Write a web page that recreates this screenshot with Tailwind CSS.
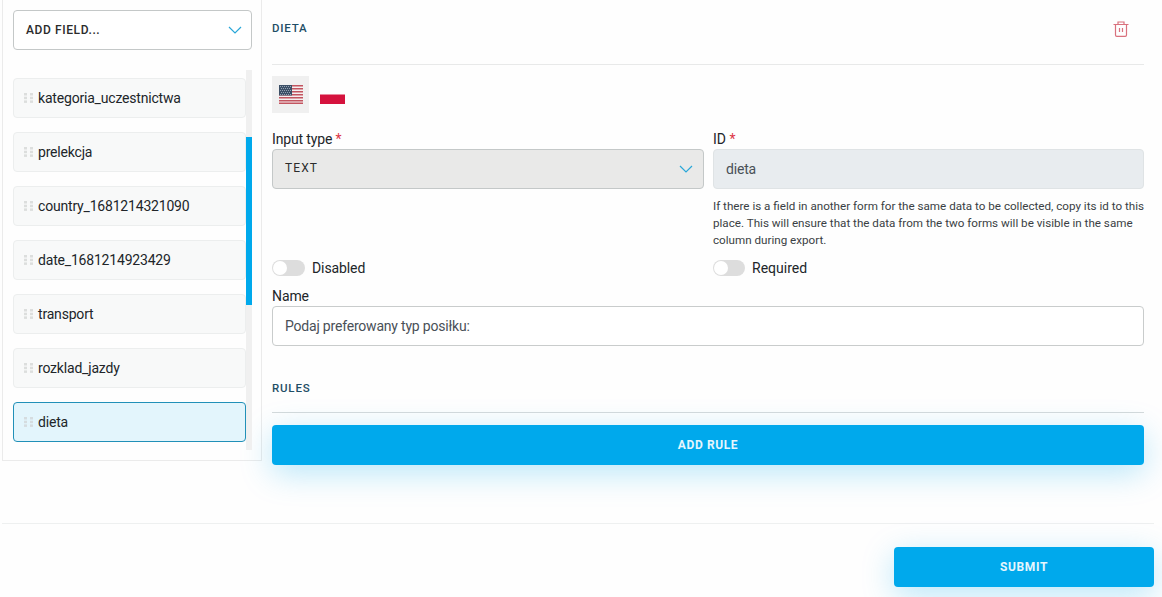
<!DOCTYPE html>
<html lang="en">
<head>
    <meta charset="UTF-8">
    <meta name="viewport" content="width=device-width, initial-scale=1.0">
    <script src="https://cdn.jsdelivr.net/npm/@tailwindcss/browser@4"></script>
    <title>Form fields</title>
</head>
<body class="h-[597px] overflow-hidden bg-[#fefefe] font-['Roboto',sans-serif] text-[14px] text-[#212529]">
    <main class="flex h-[524px] items-start border-b border-[#eef0f0] ml-[2px] mr-[8px]">
        <!-- Field list -->
        <aside class="w-[260px] h-[461px] shrink-0 border-r border-b border-l border-[#ebebeb] pt-[10px] pl-[10px] pr-[9px]">
            <div class="h-[40px] flex items-center justify-between border border-[#c4c8c8] rounded-[4px] bg-white pl-[12px] pr-[9px]">
                <span class="pb-[1px] text-[12px] font-medium tracking-[0.05em] text-[#2b2b2b]">ADD FIELD...</span>
                <svg width="14" height="8" viewBox="0 0 14 8" fill="none" stroke="#2aa7d8" stroke-width="1.2"><path d="M1 1l6 6 6-6"/></svg>
            </div>
            <div class="relative mt-[20px] h-[380px] pt-[8px] pr-[6px]">
                <div class="absolute right-0 top-0 w-[6px] h-[380px] bg-[#f0f0f0]">
                    <div class="mt-[67px] h-[168px] bg-[#00a9ec]"></div>
                </div>
                <ul class="flex flex-col gap-[14px] tracking-[-0.19px]">
                    <li class="h-[40px] flex items-center gap-[4px] bg-[#f8f9f9] border border-[#eceeee] rounded-[4px] pl-[10px]">
                        <svg width="10" height="10" viewBox="0 0 10 10" fill="#dcdedd"><rect x="0" y="0" width="3" height="2.5"/><rect x="6" y="0" width="3" height="2.5"/><rect x="0" y="3.7" width="3" height="2.5"/><rect x="6" y="3.7" width="3" height="2.5"/><rect x="0" y="7.4" width="3" height="2.5"/><rect x="6" y="7.4" width="3" height="2.5"/></svg>
                        <span>kategoria_uczestnictwa</span>
                    </li>
                    <li class="h-[40px] flex items-center gap-[4px] bg-[#f8f9f9] border border-[#eceeee] rounded-[4px] pl-[10px]">
                        <svg width="10" height="10" viewBox="0 0 10 10" fill="#dcdedd"><rect x="0" y="0" width="3" height="2.5"/><rect x="6" y="0" width="3" height="2.5"/><rect x="0" y="3.7" width="3" height="2.5"/><rect x="6" y="3.7" width="3" height="2.5"/><rect x="0" y="7.4" width="3" height="2.5"/><rect x="6" y="7.4" width="3" height="2.5"/></svg>
                        <span>prelekcja</span>
                    </li>
                    <li class="h-[40px] flex items-center gap-[4px] bg-[#f8f9f9] border border-[#eceeee] rounded-[4px] pl-[10px]">
                        <svg width="10" height="10" viewBox="0 0 10 10" fill="#dcdedd"><rect x="0" y="0" width="3" height="2.5"/><rect x="6" y="0" width="3" height="2.5"/><rect x="0" y="3.7" width="3" height="2.5"/><rect x="6" y="3.7" width="3" height="2.5"/><rect x="0" y="7.4" width="3" height="2.5"/><rect x="6" y="7.4" width="3" height="2.5"/></svg>
                        <span>country_1681214321090</span>
                    </li>
                    <li class="h-[40px] flex items-center gap-[4px] bg-[#f8f9f9] border border-[#eceeee] rounded-[4px] pl-[10px]">
                        <svg width="10" height="10" viewBox="0 0 10 10" fill="#dcdedd"><rect x="0" y="0" width="3" height="2.5"/><rect x="6" y="0" width="3" height="2.5"/><rect x="0" y="3.7" width="3" height="2.5"/><rect x="6" y="3.7" width="3" height="2.5"/><rect x="0" y="7.4" width="3" height="2.5"/><rect x="6" y="7.4" width="3" height="2.5"/></svg>
                        <span>date_1681214923429</span>
                    </li>
                    <li class="h-[40px] flex items-center gap-[4px] bg-[#f8f9f9] border border-[#eceeee] rounded-[4px] pl-[10px]">
                        <svg width="10" height="10" viewBox="0 0 10 10" fill="#dcdedd"><rect x="0" y="0" width="3" height="2.5"/><rect x="6" y="0" width="3" height="2.5"/><rect x="0" y="3.7" width="3" height="2.5"/><rect x="6" y="3.7" width="3" height="2.5"/><rect x="0" y="7.4" width="3" height="2.5"/><rect x="6" y="7.4" width="3" height="2.5"/></svg>
                        <span>transport</span>
                    </li>
                    <li class="h-[40px] flex items-center gap-[4px] bg-[#f8f9f9] border border-[#eceeee] rounded-[4px] pl-[10px]">
                        <svg width="10" height="10" viewBox="0 0 10 10" fill="#dcdedd"><rect x="0" y="0" width="3" height="2.5"/><rect x="6" y="0" width="3" height="2.5"/><rect x="0" y="3.7" width="3" height="2.5"/><rect x="6" y="3.7" width="3" height="2.5"/><rect x="0" y="7.4" width="3" height="2.5"/><rect x="6" y="7.4" width="3" height="2.5"/></svg>
                        <span>rozklad_jazdy</span>
                    </li>
                    <li class="h-[40px] flex items-center gap-[4px] bg-[#e3f5fc] border border-[#2190b8] rounded-[4px] pl-[10px]">
                        <svg width="10" height="10" viewBox="0 0 10 10" fill="#d5dcdf"><rect x="0" y="0" width="3" height="2.5"/><rect x="6" y="0" width="3" height="2.5"/><rect x="0" y="3.7" width="3" height="2.5"/><rect x="6" y="3.7" width="3" height="2.5"/><rect x="0" y="7.4" width="3" height="2.5"/><rect x="6" y="7.4" width="3" height="2.5"/></svg>
                        <span>dieta</span>
                    </li>
                </ul>
            </div>
        </aside>

        <!-- Field editor -->
        <section class="w-[872px] ml-[10px] shrink-0">
            <div class="h-[65px] flex items-start justify-between border-b border-[#e8e9e9] pt-[21px] pr-[15px]">
                <h2 class="text-[11.5px] leading-[15px] font-medium tracking-[0.07em] text-[#1f4e66]">DIETA</h2>
                <svg width="16" height="16" viewBox="0 0 16 16" fill="none" stroke="#d9717d" stroke-width="1.2"><path d="M.5 3.500h15M5 3.500V1h6v2.500M2.500 3.500V14a1.300 1.300 0 0 0 1.300 1.300h8.400a1.300 1.300 0 0 0 1.300-1.300V3.500M6.500 7v4M9.500 7v4"/></svg>
            </div>

            <div class="flex items-center gap-[11px] mt-[11px]">
                <div class="w-[37px] h-[37px] flex items-center justify-center bg-[#f0f0f0]">
                    <svg width="24" height="19" viewBox="0 0 24 19">
                        <rect width="24" height="19" fill="#f6efef"/>
                        <path d="M0 0h24v1.500H0zM0 3h24v1.500H0zM0 6h24v1.500H0zM0 9h24v1.500H0zM0 12h24v1.500H0zM0 15h24v1.500H0zM0 17.500h24V19H0z" fill="#c25560"/>
                        <rect width="13" height="10.500" fill="#3c4f66"/>
                        <path d="M1 1.500h11M2 3.500h10M1 5.500h11M2 7.500h10M1 9.500h11" stroke="#a9b6c4" stroke-width="0.8" stroke-dasharray="1 1"/>
                    </svg>
                </div>
                <svg width="25" height="19" viewBox="0 0 25 19">
                    <rect width="25" height="9.500" fill="#fefefe"/>
                    <rect y="9.500" width="25" height="9.500" fill="#d5123d"/>
                </svg>
            </div>

            <div class="grid grid-cols-[432px_431px] gap-x-[9px] mt-[16px]">
                <div>
                    <label class="block leading-[20px] h-[20px] tracking-[-0.15px]">Input type <span class="text-[#dc3545]">*</span></label>
                    <div class="h-[40px] flex items-center justify-between bg-[#e9e9e8] border border-[#c4c8c8] rounded-[4px] pl-[12px] pr-[10px]">
                        <span class="pb-[2px] text-[12px] font-normal tracking-[0.09em] text-[#2b2b2b]">TEXT</span>
                        <svg width="14" height="8" viewBox="0 0 14 8" fill="none" stroke="#2aa7d8" stroke-width="1.2"><path d="M1 1l6 6 6-6"/></svg>
                    </div>
                </div>
                <div>
                    <label class="block leading-[20px] h-[20px]">ID <span class="text-[#dc3545]">*</span></label>
                    <div class="h-[40px] flex items-center bg-[#e8ecef] border border-[#dfe3e5] rounded-[4px] pl-[12px] text-[#495057] tracking-[-0.19px]">dieta</div>
                    <p class="mt-[9px] text-[11.65px] leading-[17px] text-[#3a3f44]">If there is a field in another form for the same data to be collected, copy its id to this place. This will ensure that the data from the two forms will be visible in the same column during export.</p>
                </div>
                <div class="flex items-center gap-[7px] h-[20px] mt-[9px] col-start-1 tracking-[-0.1px]">
                    <span class="relative w-[33px] h-[16px] rounded-full bg-[#dddddd]">
                        <span class="absolute left-[1px] top-[1px] w-[14px] h-[14px] rounded-full bg-white"></span>
                    </span>
                    <span>Disabled</span>
                </div>
                <div class="flex items-center gap-[7px] h-[20px] mt-[9px] col-start-2 row-start-2">
                    <span class="relative w-[32px] h-[16px] rounded-full bg-[#dddddd]">
                        <span class="absolute left-[1px] top-[1px] w-[14px] h-[14px] rounded-full bg-white"></span>
                    </span>
                    <span>Required</span>
                </div>
            </div>

            <label class="block leading-[20px] mt-[8px] tracking-[-0.1px]">Name</label>
            <div class="h-[40px] flex items-center bg-white border border-[#c9cccc] rounded-[4px] pl-[12px] text-[#495057] tracking-[-0.2px]">Podaj preferowany typ posiłku:</div>

            <h3 class="mt-[35px] text-[11.5px] leading-[15px] font-medium tracking-[0.07em] text-[#1f4e66]">RULES</h3>
            <div class="mt-[16px] border-t border-[#d5dadb]"></div>
            <button class="mt-[12px] w-full h-[40px] rounded-[4px] bg-[#00a9ec] text-white/90 text-[12px] font-bold tracking-[0.05em] shadow-[0_8px_32px_rgba(0,169,236,0.28)]">ADD RULE</button>
        </section>
    </main>

    <footer class="flex justify-end pt-[23px] pr-[8px]">
        <button class="w-[260px] h-[40px] rounded-[4px] bg-[#00a9ec] text-white/90 text-[12px] font-bold tracking-[0.05em] shadow-[0_8px_32px_rgba(0,169,236,0.28)]">SUBMIT</button>
    </footer>
</body>
</html>
